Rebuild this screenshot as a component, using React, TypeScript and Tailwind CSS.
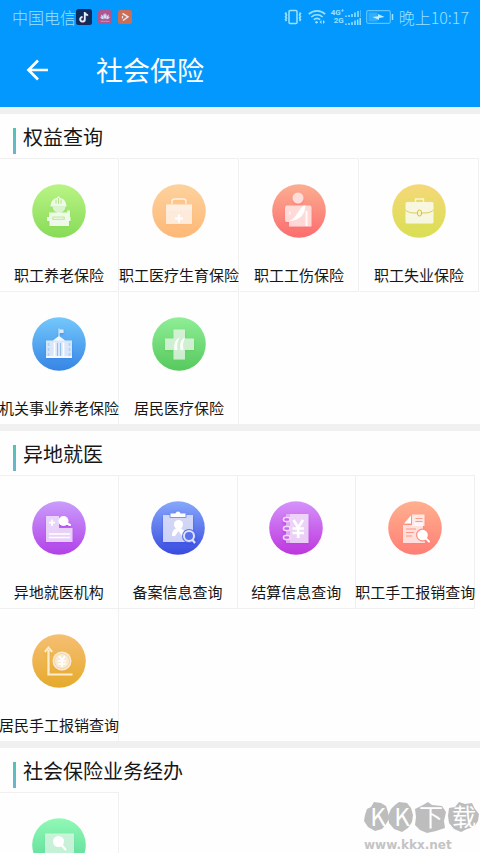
import type { ReactNode } from 'react'

type Tile = {
  id: string
  label?: string
  from: string
  to: string
  art: ReactNode
}

// Glyphs are drawn in a 54x54 box, on top of the round gradient
const rights: Tile[] = [
  {
    id: 'pension', label: '职工养老保险', from: '#b9f485', to: '#87db57',
    art: (
      <>
        <path d="M20.5 22.5h13a6.5 6.5 0 0 1-13 0z" fill="#fff" opacity=".6" />
        <path d="M18.5 22.5c0-5 3-8 6.6-8.8l1.4-1.6 1.4 1.6c3.6.8 6.6 3.8 6.6 8.8z" fill="#fff" opacity=".8" />
        <path d="M24 15.5v4M29 15.5v4M26.5 14v6" stroke="#a5df75" strokeWidth=".8" />
        <path d="M18 28.500h17l.5-2h2.500V33h.5v4H37v5H17.500v-5H15v-4h2v-4.500z" fill="#fff" opacity=".82" />
        <rect x="20" y="32.500" width="13" height="3.500" rx="1" fill="#b5e78d" opacity=".7" />
        <path d="M21.500 34.200h10" stroke="#fff" strokeWidth=".8" />
      </>
    ),
  },
  {
    id: 'maternity', label: '职工医疗生育保险', from: '#fdd29d', to: '#fdb877',
    art: (
      <>
        <path d="M20 20v-2.500q0-2.500 2.500-2.500h9q2.500 0 2.500 2.500V20" fill="none" stroke="#fff" strokeWidth="1.300" opacity=".75" />
        <path d="M14 20.500h26V40H14z" fill="#fff" opacity=".65" />
        <path d="M14 20.500h26v6H14z" fill="#fff" opacity=".2" />
        <path d="M27 30.500v8M23 34.500h8" stroke="#fff" strokeWidth="2" />
      </>
    ),
  },
  {
    id: 'injury', label: '职工工伤保险', from: '#fbae91', to: '#fb6d6e',
    art: (
      <>
        <circle cx="26" cy="14" r="5.500" fill="#fff" opacity=".65" />
        <path d="M15 21.500h22.500q2 0 2 2V42.500H17V38h-2q-2 0-2-2V23.500q0-2 2-2z" fill="#fff" opacity=".65" />
        <path d="M31.500 21.500h2c-.5 9-5 14.500-16 15.500 7-3 9.500-12.500 14-15.500z" fill="#fff" />
        <path d="M33.500 27h2v15h-2zM17 27.500h1.500v3H17z" fill="#fff" opacity=".8" />
      </>
    ),
  },
  {
    id: 'unemployment', label: '职工失业保险', from: '#f5d878', to: '#d9df53',
    art: (
      <>
        <path d="M23.500 18v-3h8v3" fill="none" stroke="#fff" strokeWidth="1.300" opacity=".7" />
        <rect x="13.500" y="18" width="28" height="21.500" rx="1.500" fill="#fff" opacity=".75" />
        <path d="M13.500 26c3 3 7 3 11.500 3h5c4.500 0 8.500 0 11.500-3" fill="none" stroke="#d9ca62" strokeWidth="1" />
        <rect x="25.500" y="26" width="4" height="6" rx="2" fill="#fbf3c4" stroke="#d3c250" strokeWidth="1" />
      </>
    ),
  },
  {
    id: 'government', label: '机关事业养老保险', from: '#74c8fb', to: '#3685e5',
    art: (
      <>
        <path d="M27 19v-7.500" stroke="#fff" strokeWidth=".8" />
        <path d="M27.500 12.500h4v3.500h-4z" fill="#fff" opacity=".75" />
        <path d="M14 23.500h7l6-4.500 6 4.500h7V41H14z" fill="#fff" opacity=".72" />
        <path d="M21 23.500h12L27 19z" fill="#fff" opacity=".7" />
        <path d="M22.500 25.500V39M31.500 25.500V39" stroke="#fff" strokeWidth="1.600" />
        <path d="M25.500 26v13M28.500 26v13" stroke="#7db8f0" strokeWidth=".8" />
        <path d="M16.500 26v13M37.500 26v13" stroke="#9fcaf5" strokeWidth="1.600" strokeDasharray="3 2" opacity=".7" />
        <path d="M14 40h26" stroke="#fff" strokeWidth="1.500" />
      </>
    ),
  },
  {
    id: 'resident', label: '居民医疗保险', from: '#8fee96', to: '#56c95d',
    art: (
      <>
        <path d="M21.500 12.500h11.500v9h9V33h-9v9.500H21.500V33H13V21.500h8.500z" fill="#fff" opacity=".62" />
        <path d="M27.500 20.500c-4 2-6 6-5 12.500h3c-1-5 0-8 2-12.500zM33 20.500c-4 2-5.500 6-4.500 12.500h3c-1-5-.5-8 1.500-12.500z" fill="#fff" opacity=".9" />
      </>
    ),
  },
]

const remote: Tile[] = [
  {
    id: 'hospital', label: '异地就医机构', from: '#ca9dfb', to: '#b241e8',
    art: (
      <>
        <path d="M14 15h13v12h13.500v14H14z" fill="#fff" opacity=".65" />
        <path d="M20 18.500v6.500M17 21.700h6" stroke="#fff" strokeWidth="1.700" />
        <path d="M17 33h21M17 36.500h21" stroke="#fff" strokeWidth="1.300" />
        <circle cx="31.500" cy="20" r="5" fill="#fff" />
        <path d="M35 22.500l3 1.500" stroke="#fff" strokeWidth="2" strokeLinecap="round" />
      </>
    ),
  },
  {
    id: 'filing', label: '备案信息查询', from: '#86a8fb', to: '#384bdf',
    art: (
      <>
        <path d="M12 14h30v27H12z" fill="#fff" opacity=".65" />
        <path d="M19 16.500V12h5.500q0-2 2.500-2t2.500 2H35v4.500z" fill="#fff" stroke="#7893f0" strokeWidth="1" />
        <circle cx="27.500" cy="23.500" r="4.500" fill="#fff" />
        <path d="M21 35c0-5 2-7 5-8h3c3 1 5 3 5 8h-3l-3.500-5-3.500 5z" fill="#fff" />
        <circle cx="38" cy="35" r="7" fill="#5a72ea" />
        <circle cx="38" cy="35" r="5" fill="none" stroke="#dfe4fc" strokeWidth="2" />
        <path d="M41.500 39l2.500 3" stroke="#dfe4fc" strokeWidth="2" />
      </>
    ),
  },
  {
    id: 'settlement', label: '结算信息查询', from: '#d593fb', to: '#bd36de',
    art: (
      <>
        <path d="M17 13h22.500v29H17z" fill="#fff" opacity=".65" />
        <path d="M17 13h4v29h-4z" fill="#cd69ee" opacity=".35" />
        <g fill="#c869ef" stroke="#f3dbfc" strokeWidth="1.500">
          <rect x="14.500" y="16.500" width="6.500" height="4" rx="2" />
          <rect x="14.500" y="25.500" width="6.500" height="4" rx="2" />
          <rect x="14.500" y="34.500" width="6.500" height="4" rx="2" />
        </g>
        <path d="M24.500 19l4.700 7.500L34 19M29.200 26.500V37M23.500 27.500h11.500M23.500 32h11.500" fill="none" stroke="#fff" strokeWidth="2.600" />
      </>
    ),
  },
  {
    id: 'employee-claim', label: '职工手工报销查询', from: '#ffb08f', to: '#ff7e75',
    art: (
      <>
        <path d="M24 13.500h12.500V25H24z" fill="#fff" opacity=".75" />
        <path d="M27.500 17.500h7M27.500 20.500h7" stroke="#ff9c86" strokeWidth="1" />
        <path d="M15 24h11v-2.500h9V27l2 15H15z" fill="#fff" opacity=".68" />
        <path d="M16 22.500l7-8v8z" fill="#fff" />
        <path d="M18 28h10M18 31.500h8M18 35h6" stroke="#ff9784" strokeWidth="1" />
        <circle cx="34.500" cy="34" r="6.500" fill="#ff8f80" />
        <circle cx="34.500" cy="34" r="5.300" fill="#fff" />
        <path d="M38 37.500l3 3" stroke="#fff" strokeWidth="2" strokeLinecap="round" />
      </>
    ),
  },
  {
    id: 'resident-claim', label: '居民手工报销查询', from: '#f6bf73', to: '#e5aa2b',
    art: (
      <>
        <path d="M16.500 16v24.500H40.500" fill="none" stroke="#fdeccc" strokeWidth="2.200" />
        <path d="M12.800 18l3.700-4.500 3.700 4.500" fill="none" stroke="#fdeccc" strokeWidth="2" />
        <circle cx="30" cy="27" r="9.500" fill="#fff" opacity=".7" />
        <circle cx="30" cy="27" r="7.500" fill="none" stroke="#f3cf8c" strokeWidth=".7" />
        <path d="M27 22l3 4 3-4M30 26v7M26 27h8M26 30h8" fill="none" stroke="#fff" strokeWidth="1.700" />
      </>
    ),
  },
]

const business: Tile[] = [
  {
    id: 'handling', from: '#90f9b5', to: '#55d795',
    art: (
      <>
        <path d="M13 15.500h29V40H13z" fill="#fff" opacity=".55" />
        <circle cx="26.500" cy="23.500" r="5.500" fill="#fff" />
        <path d="M30 27.500l3.500 4" stroke="#fff" strokeWidth="2" strokeLinecap="round" />
      </>
    ),
  },
]

function TileItem({ tile }: { tile: Tile }) {
  return (
    <li className="-mb-px border-y border-r border-[#f0f0f0]">
      <a href="#" className="flex flex-col items-center pt-[25px] pb-1.5">
        <svg className="h-[54px] w-[54px] shrink-0" viewBox="0 0 54 54" aria-hidden="true">
          <defs>
            <linearGradient id={`bg-${tile.id}`} x1="0" y1="0" x2="0" y2="1">
              <stop offset="0" stopColor={tile.from} />
              <stop offset="1" stopColor={tile.to} />
            </linearGradient>
            <filter id={`sh-${tile.id}`} x="-20%" y="-20%" width="140%" height="150%">
              <feDropShadow dx="0" dy="1.500" stdDeviation="1" floodColor={tile.to} floodOpacity=".9" />
            </filter>
          </defs>
          <circle cx="27" cy="27" r="26.800" fill={`url(#bg-${tile.id})`} />
          <g filter={`url(#sh-${tile.id})`}>{tile.art}</g>
        </svg>
        <span className="mt-[27px] h-5 text-[15px] leading-5 whitespace-nowrap">{tile.label}</span>
      </a>
    </li>
  )
}

function Section({ title, tiles, grid }: { title: string; tiles: Tile[]; grid: string }) {
  return (
    <section>
      <div className="relative h-[7px] bg-[#f0f0f0]" />
      <div className="flex h-11 items-end gap-[7px] pb-1 pl-[13px]">
        <span className="h-[26px] w-[3px] bg-gradient-to-b from-[#4fc4b4] to-[#6db4cc]" />
        <h2 className="pb-1 text-xl leading-[26px]">{title}</h2>
      </div>
      <ul className={grid}>
        {tiles.map(t => <TileItem key={t.id} tile={t} />)}
      </ul>
    </section>
  )
}

function StatusBar() {
  return (
    <div className="flex h-[33px] items-center justify-between pr-[11px] pl-3 text-base leading-5 font-light text-[#9be2ff]">
      <div className="flex items-center gap-1.5">
        <span>中国电信</span>
        <svg className="-ml-1.5 h-4 w-4" viewBox="0 0 16 16">
          <rect width="16" height="16" rx="2.500" fill="#0c2c5e" />
          <path d="M8.700 3v7.200a2.300 2.300 0 1 1-2.300-2.300M8.700 3c.2 1.900 1.400 2.900 3.200 3" fill="none" stroke="#e8405f" strokeWidth="1.800" transform="translate(.5 .4)" />
          <path d="M8.700 3v7.200a2.300 2.300 0 1 1-2.300-2.300M8.700 3c.2 1.900 1.400 2.900 3.200 3" fill="none" stroke="#d5f4ff" strokeWidth="1.700" />
        </svg>
        <svg className="h-3.5 w-3.5" viewBox="0 0 14 14">
          <rect width="14" height="14" rx="2.500" fill="#ad5690" />
          <g fill="#cfe6fa">
            <path d="M6.800 9C4.900 7.500 5 4.500 6.300 3.200 7 4.800 7.200 7 6.800 9zM7.200 9c1.900-1.500 1.800-4.500.5-5.800C7 4.800 6.800 7 7.200 9z" />
            <path d="M6 9C3.900 8.400 2.800 6.400 3.400 4.500 4.800 5.600 5.800 7.200 6 9zM8 9c2.100-.6 3.200-2.600 2.600-4.500C9.200 5.600 8.200 7.200 8 9z" />
            <path d="M2.200 6.800C2.500 8.600 4 9.300 5.500 9.200 4.700 8 3.500 7.100 2.200 6.800zM11.800 6.800c-.3 1.800-1.800 2.500-3.300 2.400.8-1.200 2-2.100 3.300-2.400z" />
          </g>
          <path d="M2.500 11.300h9" stroke="#d58fae" strokeWidth="1" />
        </svg>
        <svg className="h-3.5 w-3.5" viewBox="0 0 14 14">
          <rect width="14" height="14" rx="2.500" fill="#cc6e55" />
          <path d="M4.500 3.500l5.500 3.300-5 3.700" fill="none" stroke="#e5e6f3" strokeWidth="1.500" />
          <path d="M4.500 6v2.500" stroke="#e5e6f3" strokeWidth="1.300" />
        </svg>
      </div>
      <div className="flex items-center gap-[5px]">
        <svg className="h-4 w-5" viewBox="0 0 20 16" fill="none" stroke="currentColor">
          <rect x="6" y="1.500" width="8" height="13" rx="1" strokeWidth="1.500" />
          <path d="M3.500 3.500l-1 1 1 1.500-1 1.500 1 1.500-1 1.500 1 1.500M16.500 3.500l1 1-1 1.500 1 1.500-1 1.500 1 1.500-1 1.500" strokeWidth="1.600" />
        </svg>
        <svg className="h-4 w-[18px]" viewBox="0 0 18 16" fill="none" stroke="currentColor" strokeWidth="1.600">
          <path d="M.8 5.200c4.700-4.500 11.700-4.500 16.400 0M3.300 8c3.300-3 8.100-3 11.400 0M5.800 10.700c1.900-1.600 4.500-1.600 6.400 0" />
          <circle cx="8.500" cy="13.300" r="1.200" fill="currentColor" stroke="none" />
          <path d="M13.500 11l-2 2 2 2zM15 11l2 2-2 2z" fill="currentColor" stroke="none" />
        </svg>
        <div className="flex w-[30px] flex-col font-['Roboto',sans-serif] text-[8px] leading-2 font-bold">
          <div className="flex items-end justify-between">
            <span>4G⁺</span>
            <svg className="h-[7px] w-4" viewBox="0 0 16 7" stroke="currentColor" strokeWidth="1.500">
              <path d="M1 7V5.500M4 7V5M7 7V4M10 7V2.500M13 7V1" />
              <path d="M15.500 7V0" strokeWidth=".7" opacity=".6" />
            </svg>
          </div>
          <div className="flex items-end justify-between pl-[3px]">
            <span>2G</span>
            <svg className="h-[7px] w-4" viewBox="0 0 16 7" stroke="currentColor" strokeWidth="1.500">
              <path d="M1 7V5.500M4 7V5M7 7V4M10 7V2.500M12.700 7V1.500M15.200 7V0" />
            </svg>
          </div>
        </div>
        <svg className="h-3.5 w-7" viewBox="0 0 28 14">
          <rect x=".7" y=".7" width="23.600" height="12.600" rx="1.500" fill="none" stroke="currentColor" strokeWidth="1.200" opacity=".6" />
          <path d="M2.500 2.500h9v9h-9z" fill="currentColor" opacity=".3" />
          <path d="M6.500 7l5.500-.8V4l6.500 3-5.500.9V10z" fill="#c3eeff" />
          <path d="M26.500 4v6" stroke="currentColor" strokeWidth="1.500" />
        </svg>
        <span>晚上10:17</span>
      </div>
    </div>
  )
}

function Watermark() {
  return (
    <div className="pointer-events-none absolute right-0 bottom-0 w-[116px]">
      <svg className="block h-9 w-[116px] overflow-visible" viewBox="0 0 116 36" fill="#bdbdbd">
        <path d="M3 8l4-2 3-5 7 1 5 3 2 6 1 7-3 5-4 5-7 2-7-4-4-6 1-6z" />
        <path d="M27 8l4-4 4-3 8 1 4 5 2 7-1 7-4 6-6 4-8-3-5-6-1-7z" />
        <path d="M51 8l8-4 5-3 4 3 10 1 4 6-2 9 1 7-9 3-9 2-7-3-5-5 1-8z" />
        <path d="M85 7l6-1 4-5 6 2 7-1 3 6 4 5-1 7-4 6-7 2-6 3-7-3-5-6-1-7z" />
        <g fill="#fff" className="font-['Noto_Sans_CJK_SC',sans-serif] text-[24px]" textAnchor="middle">
          <text x="14" y="25">K</text>
          <text x="38" y="25">K</text>
          <text x="67" y="25">下</text>
          <text x="100" y="25">载</text>
        </g>
      </svg>
      <p className="font-['DejaVu_Sans',sans-serif] text-xs leading-4 font-bold text-[#c4c4c4]">www.kkx.net</p>
    </div>
  )
}

export default function App() {
  return (
    <div className="relative h-screen overflow-hidden bg-[#fefefe] font-['Noto_Sans_CJK_SC',sans-serif] text-[#161616]">
      <header className="bg-[#0398fe]">
        <StatusBar />
        <div className="flex h-[74px] items-center gap-[46px] pl-6 text-white">
          <button type="button" aria-label="返回">
            <svg className="h-[26px] w-[26px]" viewBox="0 0 26 26" fill="none" stroke="currentColor" strokeWidth="2.700">
              <path d="M24 13H5M14 3.500L4.500 13l9.500 9.500" />
            </svg>
          </button>
          <h1 className="text-[27px] leading-9">社会保险</h1>
        </div>
      </header>

      <main>
        <Section title="权益查询" tiles={rights} grid="grid grid-cols-4 gap-x-px pr-px" />
        <Section title="异地就医" tiles={remote} grid="grid grid-cols-4 pr-[5px]" />
        <Section title="社会保险业务经办" tiles={business} grid="grid grid-cols-4 pr-[5px]" />
      </main>

      <Watermark />
    </div>
  )
}
